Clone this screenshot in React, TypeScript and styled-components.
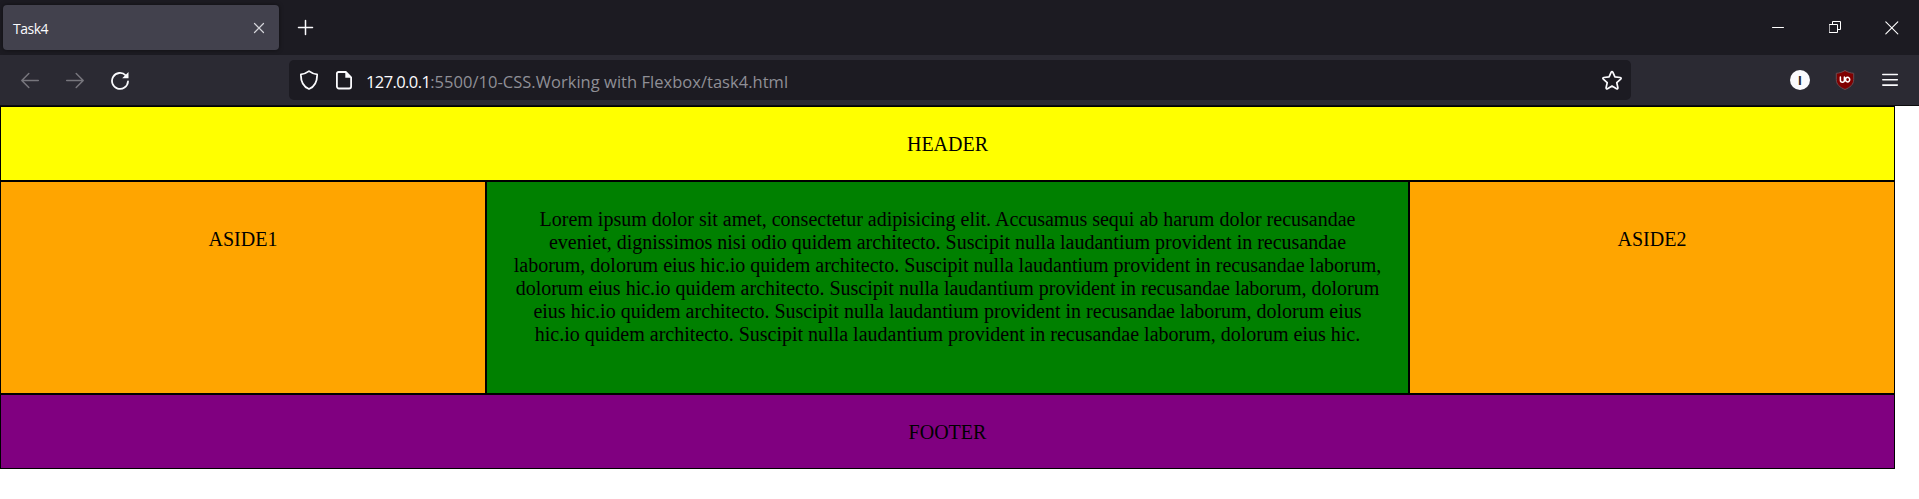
import React from "react";
import styled, { createGlobalStyle } from "styled-components";

const GlobalStyle = createGlobalStyle`
  * { box-sizing: border-box; }
  body { margin: 0; background: #fff; }
`;

const uiFont = `"Open Sans", "Noto Sans", sans-serif`;

const Window = styled.div`
  width: 100%;
  height: 499px;
  overflow: hidden;
`;

const TabStrip = styled.div`
  display: flex;
  align-items: center;
  height: 55px;
  padding: 0 20px 0 3px;
  background: #1c1b22;
`;

const Tab = styled.div`
  display: flex;
  align-items: center;
  justify-content: space-between;
  width: 276px;
  height: 45px;
  padding: 0 14px 0 10px;
  border-radius: 4px;
  background: #42414d;
  box-shadow: 0 0 4px rgba(0, 0, 0, 0.5);
`;

const TabTitle = styled.span`
  padding-top: 2px;
  font: 14px/20px ${uiFont};
  letter-spacing: -0.5px;
  color: #fbfbfe;
`;

const Icon = styled.svg<{ $w?: number; $h?: number; $color?: string; $stroke?: number }>`
  flex: none;
  display: block;
  width: ${(p) => p.$w ?? 20}px;
  height: ${(p) => p.$h ?? 20}px;
  fill: none;
  stroke: ${(p) => p.$color ?? "#fbfbfe"};
  stroke-width: ${(p) => p.$stroke ?? 1.8};
  stroke-linecap: round;
  stroke-linejoin: round;
`;

const NewTab = styled.div`
  margin-left: 18px;
`;

const WindowControls = styled.div`
  display: flex;
  align-items: center;
  gap: 43px;
  margin-left: auto;
`;

const Toolbar = styled.div`
  display: flex;
  align-items: center;
  height: 51px;
  padding: 0 19px 0 20px;
  background: #2b2a33;
  border-bottom: 1px solid #0c0c0d;
`;

const NavButtons = styled.div`
  display: flex;
  align-items: center;
  gap: 25px;
  width: 269px;
`;

const AddressBar = styled.div`
  display: flex;
  align-items: center;
  width: 1342px;
  height: 40px;
  padding: 0 8px 0 10px;
  border-radius: 5px;
  background: #1c1b22;
`;

const SiteIcons = styled.div`
  display: flex;
  align-items: center;
  gap: 15px;
`;

const Address = styled.div`
  flex: 1;
  padding: 3px 0 0 12px;
  font: 16.5px/24px ${uiFont};
  white-space: pre;
  color: #8f8f96;
  letter-spacing: 0.03px;
`;

const Host = styled.span`
  color: #fbfbfe;
  letter-spacing: -0.6px;
`;

const Extensions = styled.div`
  display: flex;
  align-items: center;
  gap: 25px;
  margin-left: auto;
`;

const Account = styled.span`
  display: grid;
  place-items: center;
  width: 20px;
  height: 20px;
  border-radius: 50%;
  background: #fbfbfe;
  color: #2b2a33;
  font: 700 13px/20px ${uiFont};
`;

const Page = styled.div`
  width: 1895px;
  font: 20px/23px "Liberation Serif", "Times New Roman", serif;
  color: #000;
  text-align: center;
`;

const Band = styled.div<{ $bg: string }>`
  height: 75px;
  padding: 26px 25px 24px;
  border: 1px solid #000;
  background: ${(p) => p.$bg};
`;

const Columns = styled.div`
  display: flex;
  height: 213px;
`;

const Aside = styled.aside`
  width: 486px;
  padding: 46px 25px;
  border: 1px solid #000;
  background: orange;
`;

const Main = styled.main`
  flex: 1;
  padding: 26px 25px 24px;
  border: 1px solid #000;
  background: green;
`;

export default function App() {
  return (
    <Window>
      <GlobalStyle />
      <TabStrip>
        <Tab>
          <TabTitle>Task4</TabTitle>
          <Icon $w={12} $h={12} $stroke={1.2} $color="#d4d4da" viewBox="0 0 12 12">
            <path d="M1.5 1.5l9 9M10.5 1.5l-9 9" />
          </Icon>
        </Tab>
        <NewTab>
          <Icon $w={17} $h={17} $stroke={1.5} viewBox="0 0 17 17">
            <path d="M8.5 1.5v14M1.5 8.5h14" />
          </Icon>
        </NewTab>
        <WindowControls>
          <Icon $w={14} $h={14} $stroke={1} $color="#fff" viewBox="0 0 14 14">
            <path d="M.5 6.500h11" />
          </Icon>
          <Icon $w={13} $h={13} $stroke={1} $color="#fff" viewBox="0 0 13 13">
            <path d="M.5 3.5h8v8h-8zM3.5 3.5v-3h8v8h-3" strokeLinejoin="miter" />
          </Icon>
          <Icon $w={14} $h={14} $stroke={1.1} $color="#fff" viewBox="0 0 14 14">
            <path d="M.8.8l12 12M12.800.8l-12 12" />
          </Icon>
        </WindowControls>
      </TabStrip>
      <Toolbar>
        <NavButtons>
          <Icon $color="#77767d" $stroke={1.5} viewBox="0 0 20 20">
            <path d="M18.300 10.500H2M8.800 3.500L1.800 10.500l7 7" />
          </Icon>
          <Icon $color="#77767d" $stroke={1.5} viewBox="0 0 20 20">
            <path d="M1.700 10.500H18M11.200 3.500l7 7-7 7" />
          </Icon>
          <Icon viewBox="0 0 20 20">
            <path d="M18 11.500a8 8 0 1 1-2.300-6.200" />
            <path d="M18.500 2v6.300h-6.300z" fill="#fbfbfe" stroke="none" />
          </Icon>
        </NavButtons>
        <AddressBar>
          <SiteIcons>
            <Icon viewBox="0 0 20 20">
              <path d="M10 1.100c2.500 1.900 5 2.900 8.100 3.200.2 6.600-2.300 12.200-8.100 14.700C4.200 16.500 1.700 10.900 1.900 4.300 5 4 7.500 3 10 1.100z" />
            </Icon>
            <Icon viewBox="0 0 20 20">
              <path d="M4.500 2h7.300l5.300 5.300v9.200a2 2 0 0 1-2 2H4.900a2 2 0 0 1-2-2V3.600A1.600 1.600 0 0 1 4.500 2z" />
              <path d="M11.300 2v5.800h5.800z" fill="#fbfbfe" stroke="none" />
            </Icon>
          </SiteIcons>
          <Address>
            <Host>127.0.0.1</Host>:5500/10-CSS.Working with Flexbox/task4.html
          </Address>
          <Icon $w={22} $h={20} $stroke={1.7} viewBox="0 0 22 20">
            <path d="M10.200 2.200Q11 .8 11.800 2.200l2.100 4.700 5.300.6q1.600.4.5 1.600l-3.900 3.600 1.100 5.100q0 1.500-1.400.9L11 16.100l-4.500 2.600q-1.400.6-1.400-.9l1.100-5.100-3.900-3.600q-1.100-1.200.5-1.600l5.300-.6z" />
          </Icon>
        </AddressBar>
        <Extensions>
          <Account>I</Account>
          <Icon viewBox="0 0 20 20" $stroke={1}>
            <path
              d="M10 .6c2.900 1.700 5.800 2.500 8.700 2.700v6.300c0 4.800-3.600 7.800-8.700 9.900C4.900 17.400 1.300 14.400 1.300 9.600V3.300C4.200 3.100 7.100 2.300 10 .6z"
              fill="#800000"
              stroke="#6b4a50"
            />
            <path
              d="M5.400 7v3.200q0 2 2 2t2-2V7M14.700 9.600a2.100 2.300 0 1 1-4.200 0 2.100 2.300 0 1 1 4.200 0z"
              stroke="#fff"
              strokeWidth="1.5"
            />
          </Icon>
          <Icon $stroke={1.6} viewBox="0 0 20 20">
            <path d="M2.800 4.500h14.500M2.800 9.800h14.500M2.800 15.100h14.500" />
          </Icon>
        </Extensions>
      </Toolbar>
      <Page>
        <Band as="header" $bg="yellow">HEADER</Band>
        <Columns>
          <Aside>ASIDE1</Aside>
          <Main>
            Lorem ipsum dolor sit amet, consectetur adipisicing elit. Accusamus sequi ab harum dolor
            recusandae eveniet, dignissimos nisi odio quidem architecto. Suscipit nulla laudantium
            provident in recusandae laborum, dolorum eius hic.io quidem architecto. Suscipit nulla
            laudantium provident in recusandae laborum, dolorum eius hic.io quidem architecto.
            Suscipit nulla laudantium provident in recusandae laborum, dolorum eius hic.io quidem
            architecto. Suscipit nulla laudantium provident in recusandae laborum, dolorum eius
            hic.io quidem architecto. Suscipit nulla laudantium provident in recusandae laborum,
            dolorum eius hic.
          </Main>
          <Aside>ASIDE2</Aside>
        </Columns>
        <Band as="footer" $bg="purple">FOOTER</Band>
      </Page>
    </Window>
  );
}
